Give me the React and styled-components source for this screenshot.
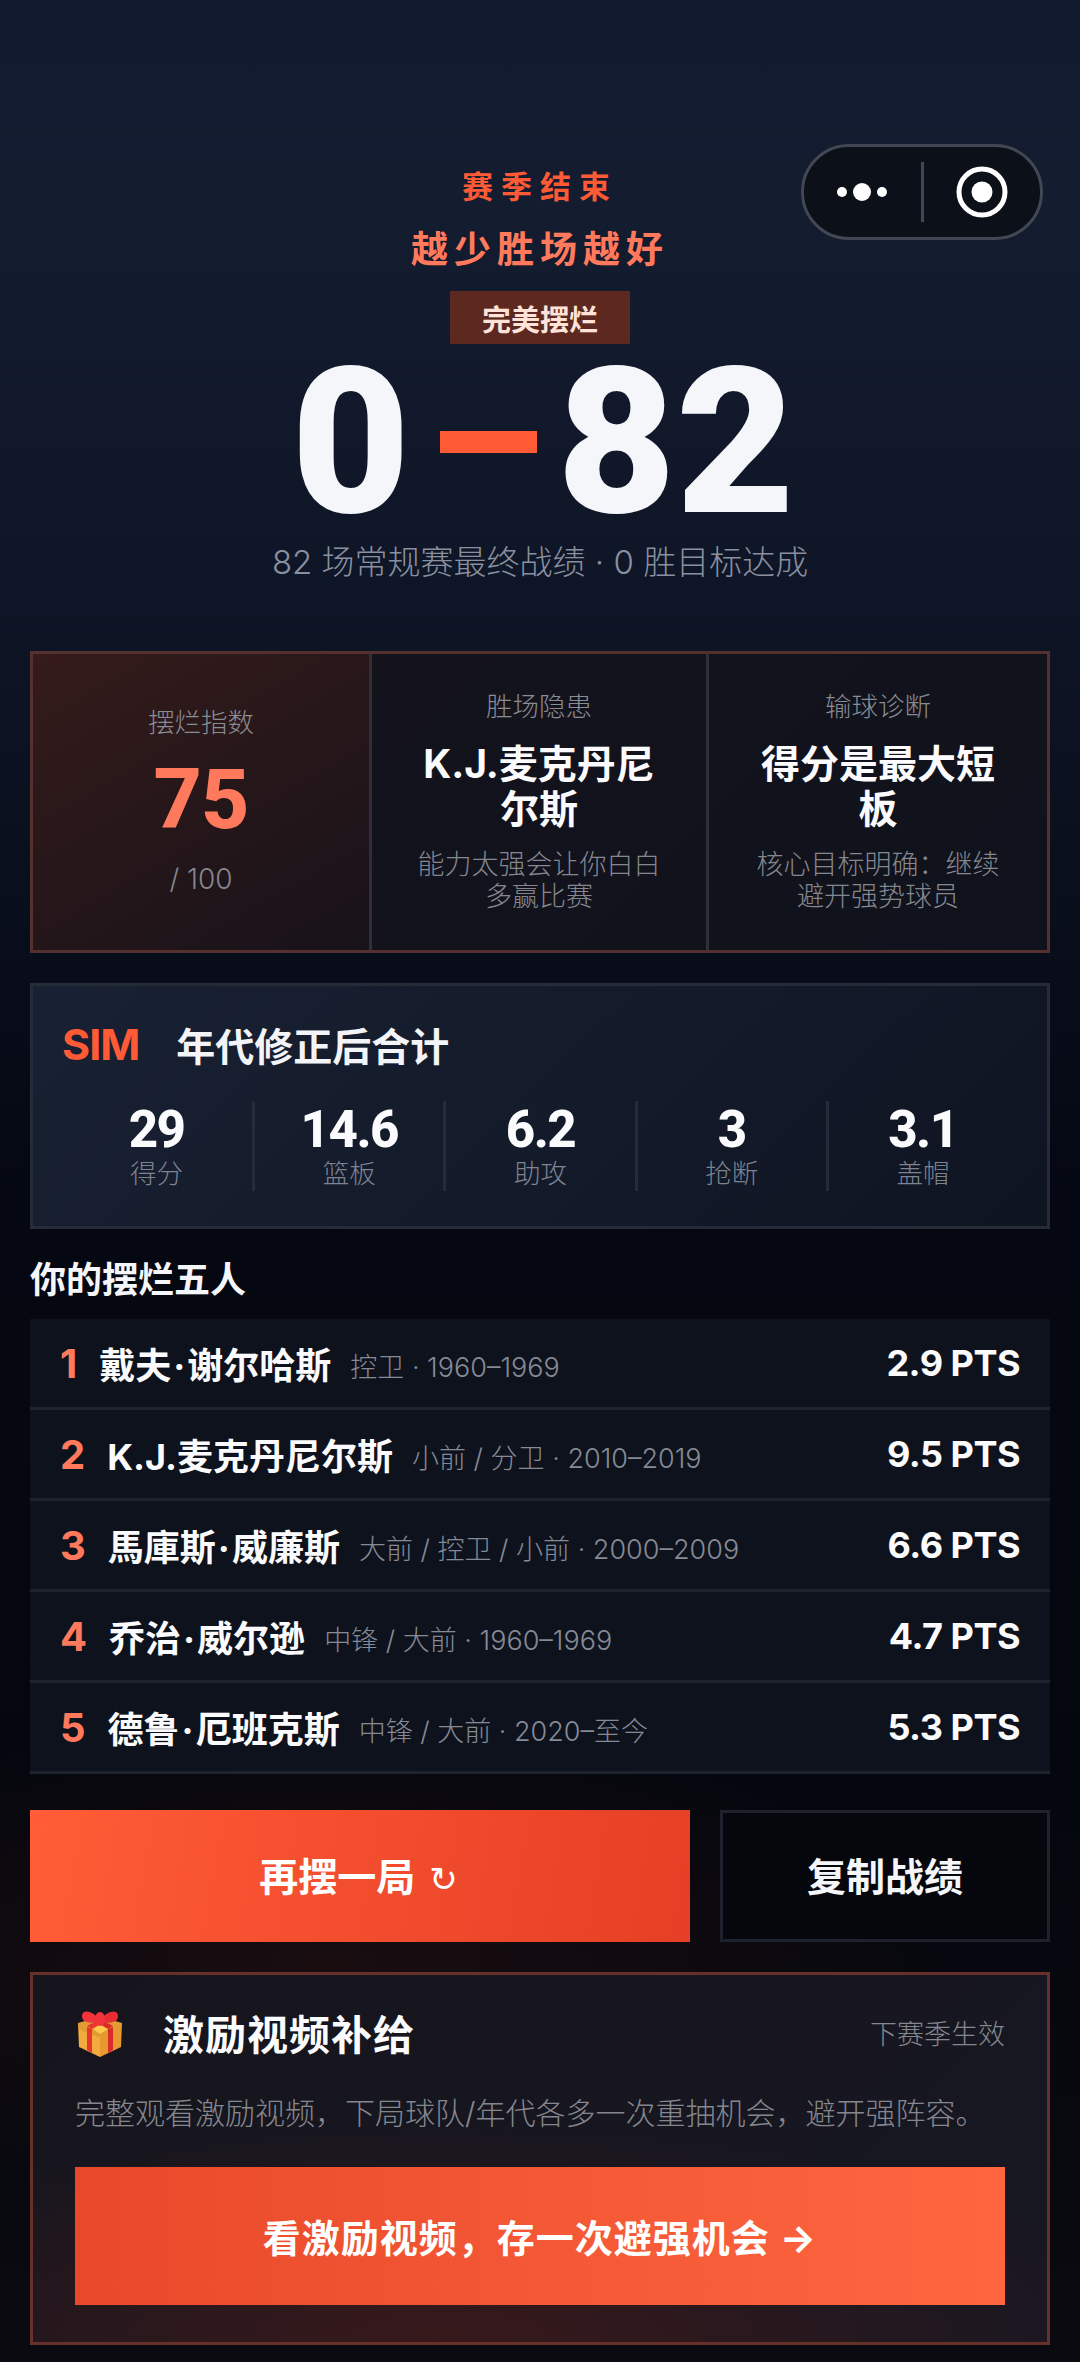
import React from 'react';
import styled, {createGlobalStyle} from 'styled-components';

const GlobalStyle = createGlobalStyle`
    html, body {
        margin: 0;
        padding: 0;
        background: #05070d;
    }
    * {
        box-sizing: border-box;
    }
`;

const numberFont = 'Roboto, "Noto Sans CJK SC", sans-serif';

const Page = styled.div`
    position: relative;
    width: 1080px;
    height: 2362px;
    overflow: hidden;
    padding: 172px 30px 0;
    font-family: Inter, "Noto Sans CJK SC", sans-serif;
    color: #f5f7fa;
    background:
        radial-gradient(620px 240px at 30% 1960px, rgba(120, 40, 20, 0.16), transparent),
        linear-gradient(180deg, #111a2e 0, #141c30 200px, #0e1526 600px, #050812 1200px, #05070e 1800px, #0a0a10 100%);
`;

const Capsule = styled.div`
    position: absolute;
    top: 144px;
    left: 801px;
    width: 242px;
    height: 96px;
    display: flex;
    align-items: center;
    background: #0c1019;
    border: 3px solid #414753;
    border-radius: 48px;
`;

const CapsuleSide = styled.div`
    flex: 1;
    display: flex;
    justify-content: center;
    align-items: center;
`;

const CapsuleLine = styled.div`
    width: 3px;
    height: 60px;
    background: #414753;
`;

const Hero = styled.section`
    display: flex;
    flex-direction: column;
    align-items: center;
`;

const Season = styled.div`
    font-size: 31px;
    line-height: 30px;
    font-weight: 700;
    letter-spacing: 8px;
    color: #ff5a36;
`;

const Slogan = styled.div`
    margin-top: 30px;
    font-size: 37px;
    line-height: 36px;
    font-weight: 700;
    letter-spacing: 6px;
    color: #ff7a5c;
`;

const Badge = styled.div`
    margin-top: 23px;
    width: 180px;
    height: 53px;
    display: flex;
    align-items: center;
    justify-content: center;
    background: #5c2820;
    color: #ffe3d9;
    font-size: 29px;
    font-weight: 700;
`;

const Score = styled.div`
    margin: 10px 0 0 6px;
    height: 176px;
    display: flex;
    align-items: center;
    font-family: ${numberFont};
    font-size: 205px;
    line-height: 176px;
    font-weight: 900;
    color: #f4f6f9;
`;

const Dash = styled.span`
    width: 97px;
    height: 22px;
    margin: 0 20px 0 30px;
    background: #ff5a36;
`;

const SubLine = styled.div`
    margin-top: 12px;
    font-size: 33px;
    line-height: 40px;
    font-weight: 300;
    color: #8a90a0;
`;

const StatsGrid = styled.section`
    margin-top: 69px;
    height: 302px;
    display: grid;
    grid-template-columns: 336px 337px 1fr;
    border: 3px solid #54302f;
    background: linear-gradient(135deg, #15131c, #0f121c);
`;

const StatCell = styled.div`
    padding: ${p => (p.$lead ? '51px' : '35px')} 36px 0;
    text-align: center;
    border-left: ${p => (p.$lead ? '0' : '3px solid #302f38')};
    background: ${p => (p.$lead ? 'linear-gradient(150deg, #351b1a, #171219)' : 'transparent')};
`;

const CellLabel = styled.div`
    font-size: 26.5px;
    line-height: 34px;
    font-weight: 300;
    color: #8a8c94;
`;

const BigScore = styled.div`
    margin-top: 21px;
    font-family: ${numberFont};
    font-size: 84px;
    line-height: 80px;
    font-weight: 800;
    letter-spacing: -1px;
    color: #ff7a5c;
`;

const OutOf = styled.div`
    margin-top: 22px;
    font-size: 28px;
    line-height: 34px;
    font-weight: 300;
    color: #85878f;
`;

const CellName = styled.div`
    margin-top: 18px;
    font-size: 39px;
    line-height: 45px;
    font-weight: 700;
    color: #fbfbfd;
`;

const CellNote = styled.div`
    margin-top: 18px;
    font-size: 27px;
    line-height: 32px;
    font-weight: 300;
    color: #85878f;
`;

const SimCard = styled.section`
    margin-top: 30px;
    height: 246px;
    padding: 35px 30px 0 28px;
    border: 3px solid #262b38;
    background: linear-gradient(135deg, #182133, #0f1421);
`;

const SimHead = styled.div`
    display: flex;
    align-items: center;
    gap: 37px;
    height: 46px;
`;

const SimTag = styled.span`
    margin-left: 1px;
    font-size: 43px;
    font-weight: 700;
    letter-spacing: -1px;
    color: #ff5a36;
`;

const SimTitle = styled.span`
    font-size: 39px;
    font-weight: 700;
    color: #f3f4f7;
`;

const SimRow = styled.div`
    margin-top: 34px;
    display: grid;
    grid-template-columns: repeat(5, 1fr);
`;

const SimCol = styled.div`
    height: 90px;
    display: flex;
    flex-direction: column;
    align-items: center;
    border-left: ${p => (p.$first ? '0' : '3px solid #252b39')};
`;

const SimValue = styled.div`
    padding-top: 2px;
    font-family: ${numberFont};
    font-size: 51px;
    line-height: 54px;
    font-weight: 800;
    letter-spacing: -1.5px;
    color: #fbfbfd;
`;

const SimLabel = styled.div`
    font-size: 26.5px;
    line-height: 32px;
    font-weight: 300;
    color: #7d8391;
`;

const SectionTitle = styled.h2`
    margin: 29px 0 0;
    height: 61px;
    font-size: 36px;
    line-height: 44px;
    font-weight: 700;
    color: #f5f6f9;
`;

const Roster = styled.section`
    display: flex;
    flex-direction: column;
`;

const PlayerRow = styled.div`
    height: 91px;
    display: flex;
    align-items: center;
    padding: 0 30px;
    background: #0e121c;
    border-bottom: 3px solid #1f232d;
`;

const Rank = styled.span`
    font-size: 40px;
    font-weight: 700;
    color: #ff7a5c;
    margin-right: 22px;
`;

const PlayerName = styled.span`
    font-size: 36px;
    font-weight: 700;
    color: #fbfbfd;
`;

const NameDot = styled.span`
    margin: 0 2px;
`;

const PlayerMeta = styled.span`
    margin-left: 19px;
    padding-top: 4px;
    font-size: 27px;
    font-weight: 300;
    color: #858a97;
`;

const Points = styled.span`
    margin-left: auto;
    font-size: 36px;
    font-weight: 700;
    letter-spacing: -0.5px;
    color: #fbfbfd;
`;

const Actions = styled.div`
    margin-top: 36px;
    display: grid;
    grid-template-columns: 660px 1fr;
    gap: 30px;
    height: 132px;
`;

const PrimaryButton = styled.button`
    border: 0;
    padding: 0 3px 4px 0;
    font-family: inherit;
    font-size: 39px;
    font-weight: 700;
    color: #fff;
    background: linear-gradient(${p => (p.$reverse ? '90deg, #e8492a, #ff6640' : '100deg, #ff5c37, #e53f25')});
`;

const Refresh = styled.span`
    margin-left: 14px;
    font-family: "DejaVu Sans", sans-serif;
    font-size: 34px;
    font-weight: 400;
`;

const GhostButton = styled.button`
    padding: 0 0 4px;
    font-family: inherit;
    font-size: 39px;
    font-weight: 700;
    color: #f5f6f9;
    background: #05070d;
    border: 3px solid #1e222c;
`;

const RewardCard = styled.section`
    margin-top: 30px;
    height: 373px;
    padding: 0 42px;
    display: flex;
    flex-direction: column;
    border: 3px solid #67302a;
    background:
        radial-gradient(700px 220px at 40% 100%, #38191b, transparent),
        linear-gradient(135deg, #16151d, #171722);
`;

const RewardHead = styled.div`
    height: 117px;
    display: flex;
    align-items: center;
`;

const RewardTitle = styled.div`
    margin-left: 41px;
    padding-bottom: 4px;
    font-size: 41px;
    font-weight: 700;
    letter-spacing: 1px;
    color: #fbfbfd;
`;

const RewardNote = styled.div`
    margin-left: auto;
    padding-bottom: 2px;
    font-size: 27px;
    font-weight: 300;
    color: #85878f;
`;

const RewardText = styled.div`
    margin-top: -1px;
    font-size: 30px;
    line-height: 44px;
    font-weight: 300;
    white-space: nowrap;
    color: #85878f;
`;

const RewardButton = styled(PrimaryButton)`
    margin-top: 32px;
    height: 138px;
    width: 930px;
    padding: 0 0 2px;
    font-size: 38px;
    letter-spacing: 1px;
`;

const GiftWrap = styled.span`
    display: flex;
    margin-left: 3px;
`;

const MoreDots = () => (
    <svg width="52" height="24" viewBox="0 0 52 24">
        <circle cx="6" cy="12" r="5" fill="#fff" />
        <circle cx="26" cy="12" r="9" fill="#fff" />
        <circle cx="46" cy="12" r="5" fill="#fff" />
    </svg>
);

const CloseRing = () => (
    <svg width="52" height="52" viewBox="0 0 52 52">
        <circle cx="26" cy="26" r="23" fill="none" stroke="#fff" strokeWidth="5" />
        <circle cx="26" cy="26" r="10.5" fill="#fff" />
    </svg>
);

// emoji font isn't there, so the present is drawn
const GiftIcon = () => (
    <GiftWrap>
        <svg width="44" height="48" viewBox="0 0 44 48">
            <path d="M0 13 L22 22 L22 47 L1 37 Z" fill="#f2ab3c" />
            <path d="M44 13 L22 22 L22 47 L43 37 Z" fill="#e9982f" />
            <path d="M0 13 L14 9 L30 9 L44 13 L42 20 L26 26 L22 28 L18 26 L2 20 Z" fill="#e39a35" />
            <path d="M15 19 L22 15 L30 19 L22 24 Z" fill="#ffc94d" />
            <path d="M9 17 L14 19 L14 43 L9 40 Z" fill="#e8352f" />
            <path d="M30 19 L35 17 L35 40 L30 43 Z" fill="#d92c28" />
            <path d="M9 16 L22 9 L25 12 L14 19 Z" fill="#e8352f" />
            <path d="M35 16 L22 9 L19 12 L30 19 Z" fill="#d92c28" />
            <path d="M20 8 C14 0 3 -1 4 7 C5 13 14 14 20 11 Z" fill="#f0343a" />
            <path d="M24 8 C30 0 41 -1 40 7 C39 13 30 14 24 11 Z" fill="#e82c32" />
            <ellipse cx="22" cy="9" rx="5" ry="7" fill="#f0343a" />
        </svg>
    </GiftWrap>
);

const simStats = [
    {value: '29', label: '得分'},
    {value: '14.6', label: '篮板'},
    {value: '6.2', label: '助攻'},
    {value: '3', label: '抢断'},
    {value: '3.1', label: '盖帽'},
];

const players = [
    {name: ['戴夫', '谢尔哈斯'], meta: '控卫 · 1960–1969', pts: '2.9 PTS'},
    {name: ['K.J.麦克丹尼尔斯'], meta: '小前 / 分卫 · 2010–2019', pts: '9.5 PTS'},
    {name: ['馬庫斯', '威廉斯'], meta: '大前 / 控卫 / 小前 · 2000–2009', pts: '6.6 PTS'},
    {name: ['乔治', '威尔逊'], meta: '中锋 / 大前 · 1960–1969', pts: '4.7 PTS'},
    {name: ['德鲁', '厄班克斯'], meta: '中锋 / 大前 · 2020–至今', pts: '5.3 PTS'},
];

const App = () => {
    return (
        <Page>
            <GlobalStyle />
            <Capsule>
                <CapsuleSide><MoreDots /></CapsuleSide>
                <CapsuleLine />
                <CapsuleSide><CloseRing /></CapsuleSide>
            </Capsule>

            <Hero>
                <Season>赛季结束</Season>
                <Slogan>越少胜场越好</Slogan>
                <Badge>完美摆烂</Badge>
                <Score>0<Dash />82</Score>
                <SubLine>82 场常规赛最终战绩 · 0 胜目标达成</SubLine>
            </Hero>

            <StatsGrid>
                <StatCell $lead>
                    <CellLabel>摆烂指数</CellLabel>
                    <BigScore>75</BigScore>
                    <OutOf>/ 100</OutOf>
                </StatCell>
                <StatCell>
                    <CellLabel>胜场隐患</CellLabel>
                    <CellName>K.J.麦克丹尼尔斯</CellName>
                    <CellNote>能力太强会让你白白多赢比赛</CellNote>
                </StatCell>
                <StatCell>
                    <CellLabel>输球诊断</CellLabel>
                    <CellName>得分是最大短板</CellName>
                    <CellNote>核心目标明确：继续避开强势球员</CellNote>
                </StatCell>
            </StatsGrid>

            <SimCard>
                <SimHead>
                    <SimTag>SIM</SimTag>
                    <SimTitle>年代修正后合计</SimTitle>
                </SimHead>
                <SimRow>
                    {simStats.map((s, i) => (
                        <SimCol key={s.label} $first={i === 0}>
                            <SimValue>{s.value}</SimValue>
                            <SimLabel>{s.label}</SimLabel>
                        </SimCol>
                    ))}
                </SimRow>
            </SimCard>

            <SectionTitle>你的摆烂五人</SectionTitle>
            <Roster>
                {players.map((p, i) => (
                    <PlayerRow key={p.meta}>
                        <Rank>{i + 1}</Rank>
                        <PlayerName>
                            {p.name[0]}
                            {p.name[1] && <NameDot>·</NameDot>}
                            {p.name[1]}
                        </PlayerName>
                        <PlayerMeta>{p.meta}</PlayerMeta>
                        <Points>{p.pts}</Points>
                    </PlayerRow>
                ))}
            </Roster>

            <Actions>
                <PrimaryButton>再摆一局<Refresh>↻</Refresh></PrimaryButton>
                <GhostButton>复制战绩</GhostButton>
            </Actions>

            <RewardCard>
                <RewardHead>
                    <GiftIcon />
                    <RewardTitle>激励视频补给</RewardTitle>
                    <RewardNote>下赛季生效</RewardNote>
                </RewardHead>
                <RewardText>完整观看激励视频，下局球队/年代各多一次重抽机会，避开强阵容。</RewardText>
                <RewardButton $reverse>看激励视频，存一次避强机会 →</RewardButton>
            </RewardCard>
        </Page>
    );
};

export default App;
